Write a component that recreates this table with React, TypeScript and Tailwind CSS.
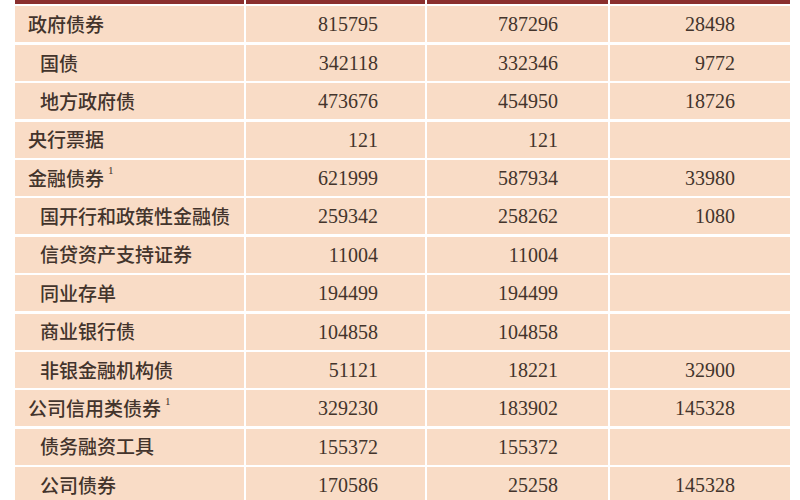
type Row = {
  label: string;
  sub?: boolean;
  note?: boolean;
  a: string;
  b: string;
  c: string;
};

const rows: Row[] = [
  { label: "政府债券", a: "815795", b: "787296", c: "28498" },
  { label: "国债", sub: true, a: "342118", b: "332346", c: "9772" },
  { label: "地方政府债", sub: true, a: "473676", b: "454950", c: "18726" },
  { label: "央行票据", a: "121", b: "121", c: "" },
  { label: "金融债券", note: true, a: "621999", b: "587934", c: "33980" },
  { label: "国开行和政策性金融债", sub: true, a: "259342", b: "258262", c: "1080" },
  { label: "信贷资产支持证券", sub: true, a: "11004", b: "11004", c: "" },
  { label: "同业存单", sub: true, a: "194499", b: "194499", c: "" },
  { label: "商业银行债", sub: true, a: "104858", b: "104858", c: "" },
  { label: "非银金融机构债", sub: true, a: "51121", b: "18221", c: "32900" },
  { label: "公司信用类债券", note: true, a: "329230", b: "183902", c: "145328" },
  { label: "债务融资工具", sub: true, a: "155372", b: "155372", c: "" },
  { label: "公司债券", sub: true, a: "170586", b: "25258", c: "145328" },
];

const cjk = "font-['Noto_Sans_CJK_SC','Noto_Sans',sans-serif]";
const num = "font-['Liberation_Serif','Noto_Sans_CJK_SC',serif]";

export default function App() {
  return (
    <div className="h-[500px] w-[800px] overflow-hidden bg-white">
      <div className="ml-[15px] grid w-[775px] grid-cols-[229px_179px_181px_180px] gap-x-[2px] gap-y-[2.4px]">
        <div className="h-[4px] bg-[#8a2f2e]" />
        <div className="h-[4px] bg-[#8a2f2e]" />
        <div className="h-[4px] bg-[#8a2f2e]" />
        <div className="h-[4px] bg-[#8a2f2e]" />
        {rows.map((r) => (
          <RowCells key={r.label} row={r} />
        ))}
      </div>
    </div>
  );
}

function RowCells({ row }: { row: Row }) {
  const cell = "flex h-[36px] items-center bg-[#f9dcc6] text-[#43342c]";
  return (
    <>
      <div className={`${cell} ${cjk} font-medium text-[19px] ${row.sub ? "pl-[25px]" : "pl-[13px]"}`}>
        <span>{row.label}</span>
        {row.note ? (
          <sup className={`${num} ml-[4px] -translate-y-[2px] text-[11px] font-normal`}>1</sup>
        ) : null}
      </div>
      <div className={`${cell} ${num} justify-end pr-[47px] text-[20px]`}>{row.a}</div>
      <div className={`${cell} ${num} justify-end pr-[50px] text-[20px]`}>{row.b}</div>
      <div className={`${cell} ${num} justify-end pr-[55px] text-[20px]`}>{row.c}</div>
    </>
  );
}
